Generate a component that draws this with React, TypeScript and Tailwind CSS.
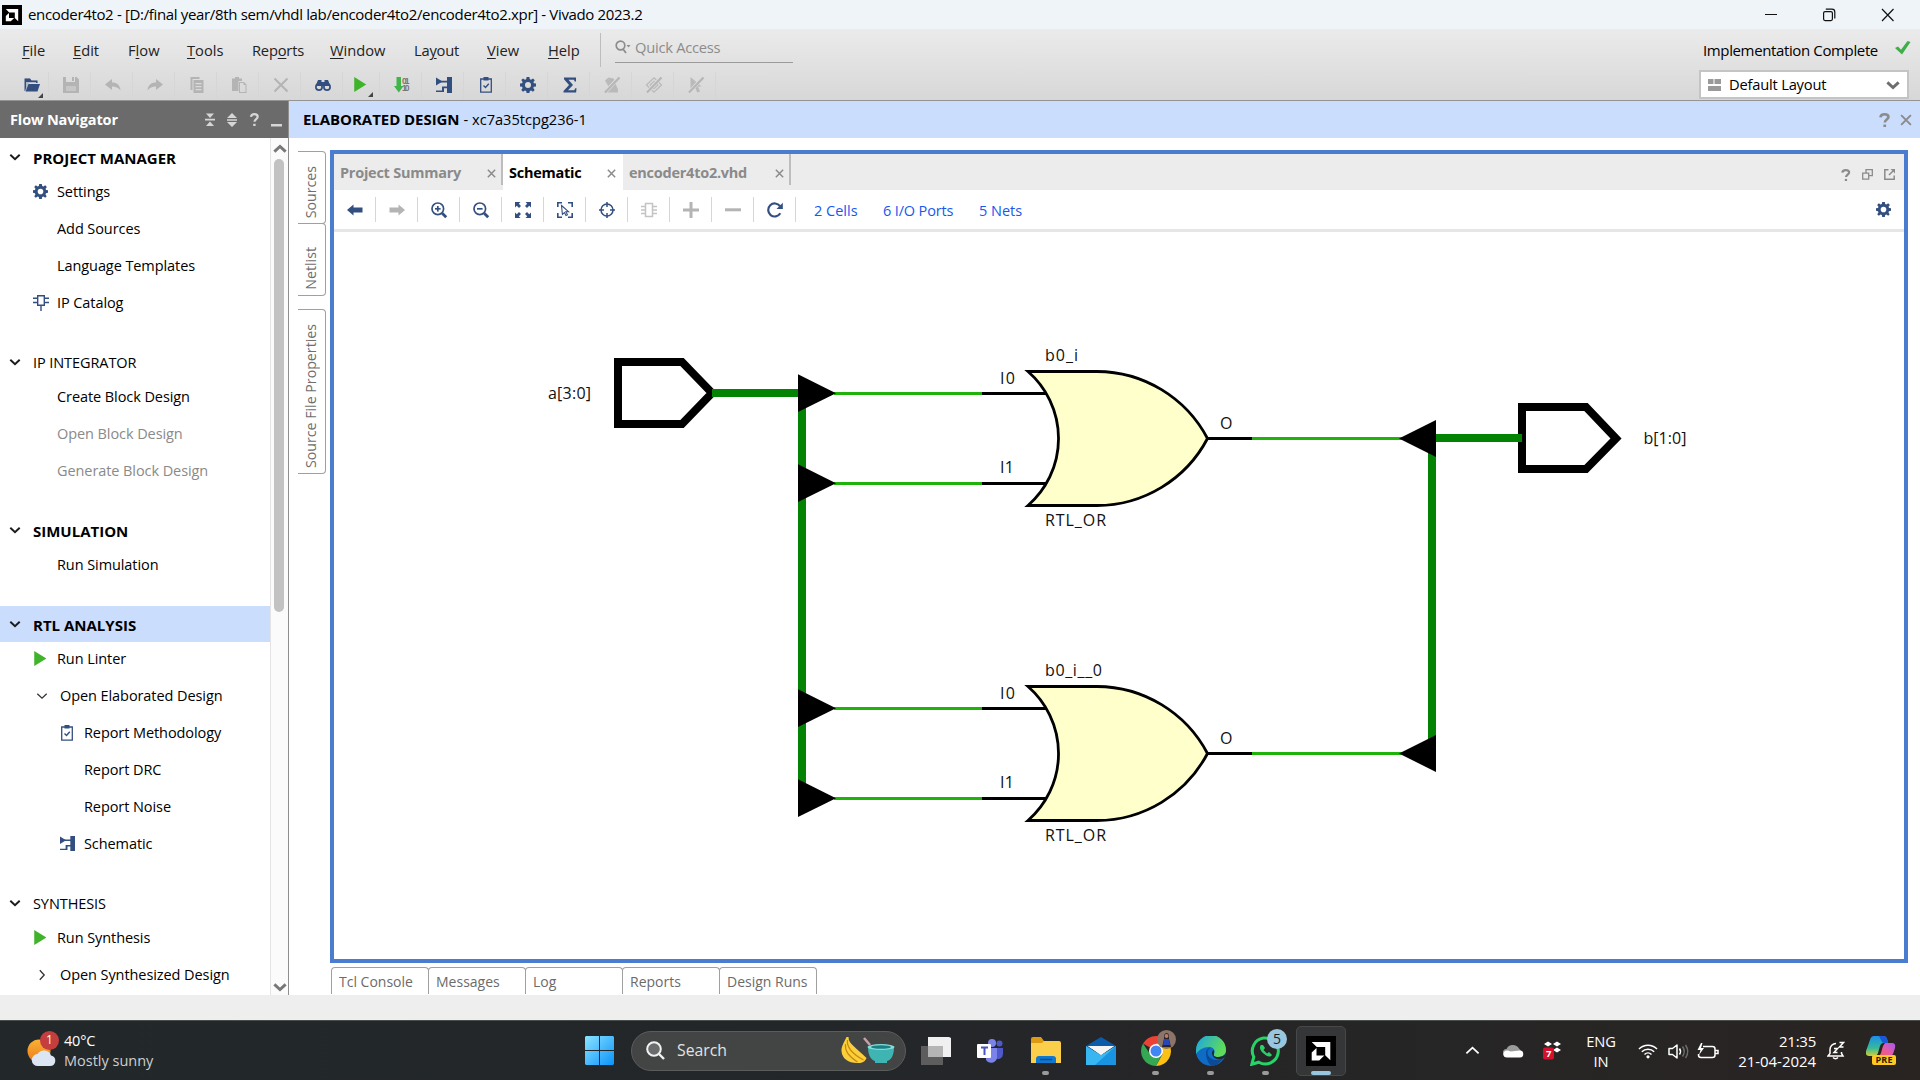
import React from "react";
import type { ReactNode } from "react";

const NAVY = "#334f80";
const GREY = "#b4b4b4";

type IconProps = { size?: number; color?: string };

function Svg({ size = 16, color = NAVY, children, vb = "0 0 16 16" }: IconProps & { children: ReactNode; vb?: string }) {
  return (
    <svg width={size} height={size} viewBox={vb} fill={color} stroke="none" className="block shrink-0 overflow-visible">
      {children}
    </svg>
  );
}

const Gear = (p: IconProps) => (
  <Svg {...p}>
    <path
      fillRule="evenodd"
      d="M6.6 0h2.8l.4 2.2 1.3.5L13 1.4 14.800 3.200 13.400 5l.5 1.300L16 6.600v2.800l-2.200.4-.5 1.300L14.600 13 13 14.700l-1.900-1.300-1.300.5L9.400 16H6.600l-.4-2.100-1.300-.5L3 14.700 1.300 13l1.300-1.900-.5-1.300L0 9.400V6.600l2.100-.3.500-1.300L1.300 3.100 3 1.400l1.900 1.300 1.300-.5zM8 5a3 3 0 1 0 0 6 3 3 0 0 0 0-6z"
    />
  </Svg>
);
const FolderOpen = (p: IconProps) => (
  <Svg {...p}>
    <path d="M1 1.500h5l1.500 2h6V6H5L2.500 12 1 14z" opacity=".25" />
    <path d="M.5 1.500h5.500l1.500 2H13.500V6H12V5H2v6L1 14H.5z" />
    <path d="M4.500 7H16l-2.500 7.500H1.500z" />
  </Svg>
);
const Save = (p: IconProps) => (
  <Svg {...p}>
    <path fillRule="evenodd" d="M0 0h3v5h9V0h1.500L16 2.500V16H0zM9 0h2v4H9zM3 9v5h10V9z" />
    <path d="M3 9h10v5H3z" opacity=".5" />
  </Svg>
);
const Undo = (p: IconProps) => (
  <Svg {...p}>
    <path d="M0 7.500 7 2v3.500c5 0 8 2.500 8.500 8C13 10.500 11 9.500 7 9.500V13z" />
  </Svg>
);
const Redo = (p: IconProps) => (
  <Svg {...p}>
    <path d="M16 7.500 9 2v3.500c-5 0-8 2.500-8.500 8C3 10.500 5 9.500 9 9.500V13z" />
  </Svg>
);
const Copy = (p: IconProps) => (
  <Svg {...p}>
    <path d="M1.500 0h9v2h-7v11h-2z" />
    <path fillRule="evenodd" d="M4.500 3h10v13h-10zM6.500 6v1.200h6V6zm0 3v1.200h6V9zm0 3v1.200h6V12z" />
  </Svg>
);
const Paste = (p: IconProps) => (
  <Svg {...p}>
    <path d="M1 1.500h3V0h4v1.500h3V4H7.500v10H1z" />
    <path fillRule="evenodd" d="M8 5h5l2.500 2.500V16H8zm1 1v9h5.500V8H12.500V6z" />
  </Svg>
);
const Cross = ({ w = 2, ...p }: IconProps & { w?: number }) => (
  <Svg {...p}>
    <path d="M1.500 1.500l13 13M14.500 1.500l-13 13" stroke={p.color} strokeWidth={w} />
  </Svg>
);
const Binoculars = (p: IconProps) => (
  <Svg {...p}>
    <path d="M3 3h3.500v2h3V3H13l2 5v1H1V8z" />
    <g fill="none" stroke={NAVY} strokeWidth="1.700">
      <circle cx="4" cy="10" r="3.100" />
      <circle cx="12" cy="10" r="3.100" />
    </g>
  </Svg>
);
const Play = ({ size = 15 }: { size?: number }) => (
  <svg width={size * 0.83} height={size} viewBox="0 0 12 15" className="block shrink-0">
    <path d="M0 0l12 7.500L0 15z" fill="#3fb32a" />
  </svg>
);
const Program = () => (
  <Svg>
    <path d="M2.500 0H7v9h2.500l-4.700 6.500L0 9h2.500z" fill="#3fb54a" />
    <text x="8" y="6.500" fontSize="8.500" fontWeight="700" fill="#777" fontFamily="Liberation Sans" textLength="7.500">01</text>
    <text x="8" y="14" fontSize="8.500" fontWeight="700" fill="#777" fontFamily="Liberation Sans" textLength="7.500">10</text>
  </Svg>
);
const SchematicIcon = (p: IconProps) => (
  <Svg {...p}>
    <path d="M0 .5l6.500 4L0 8.500z" />
    <path d="M4 3.800h8v1.600H4zM11 0h5v16h-5z" />
    <path d="M0 13.500h6V9.500h6v1.700H8V15H0z" />
  </Svg>
);
const Clipboard = (p: IconProps) => (
  <Svg {...p}>
    <path d="M2.700 2h10.600v13.200H2.700z" fill="none" stroke={NAVY} strokeWidth="1.300" />
    <path d="M5.500 0h5v3.500h-5z" />
    <path d="M5.500 8.500l2 2 3.300-3.800" fill="none" stroke={NAVY} strokeWidth="1.400" />
  </Svg>
);
const Sigma = (p: IconProps) => (
  <Svg {...p}>
    <path d="M2 0.500h12V4.500h-1.300L12 2.800H6.500L11 8l-5 5.200h6.300l.9-2H14.500l-.4 4.300H1.500V14L7 8 2 2.200z" />
  </Svg>
);
const SlashMark = ({ kind }: { kind: number }) => (
  <Svg color="#bababa">
    {kind === 0 && <path d="M1 3.500l3.500-3 5 1L11 4 4.500 9.500zM1 15.500v-3h5l5.500-6 2.500 6v3z" />}
    {kind === 1 && <path d="M8 .8L15.500 8 8 15.200.5 8zM8 4.300L11.800 8 8 11.700 4.200 8z" fill="none" stroke="#bababa" strokeWidth="1.300" />}
    {kind === 2 && <path d="M2.500 0l11 9.500H10l2 5-2.800 1-2-4.800L2.500 14z" />}
    <path d="M15 .5L1.500 15" stroke="#dcdcdc" strokeWidth="3.600" />
    <path d="M15.500 .5L1 15.500" stroke="#b6b6b6" strokeWidth="2.200" />
  </Svg>
);
const IpIcon = ({ color = NAVY }: IconProps) => (
  <Svg>
    <path d="M4.700.8h6.600v9.400H4.700zM0 3.200h4.700M0 7.500h4.700M11.300 3.200H16M11.300 7.500H16M8 10.200V16" fill="none" stroke={color} strokeWidth="1.400" />
  </Svg>
);
const Chevron = ({ dir = "down", w = 2, size = 10, color = "#1c1c1c" }: { dir?: "down" | "up" | "right"; w?: number; size?: number; color?: string }) => (
  <svg width={size} height={size} viewBox="0 0 10 10" fill="none" stroke={color} strokeWidth={w} className="block shrink-0 overflow-visible">
    {dir === "down" && <path d="M.3 2.800 5 7.200l4.700-4.400" />}
    {dir === "up" && <path d="M.3 7.200 5 2.800l4.700 4.400" />}
    {dir === "right" && <path d="M2.800.3 7.200 5 2.800 9.700" />}
  </svg>
);
const Arrow = ({ flip, color }: { flip?: boolean; color: string }) => (
  <Svg color={color}>
    <path d={flip ? "M16 8L9.500 2.500v3H.5v5h9v3z" : "M0 8l6.500-5.500v3h9v5h-9v3z"} />
  </Svg>
);
const Zoom = ({ plus }: { plus?: boolean }) => (
  <Svg>
    <g fill="none" stroke={NAVY} strokeWidth="1.700">
      <circle cx="6.800" cy="6.800" r="5.800" />
      <path d="M4 6.800h5.600" />
      {plus && <path d="M6.800 4v5.600" />}
      <path d="M11.200 11.200l4 4" strokeWidth="2.800" />
    </g>
  </Svg>
);
const Expand = () => (
  <Svg>
    <path d="M0 0h5.500L3.800 1.800 6 4 4 6 1.800 3.800 0 5.500zM16 0h-5.500l1.700 1.800L10 4l2 2 2.200-2.200L16 5.500zM0 16h5.500l-1.700-1.800L6 12l-2-2-2.200 2.200L0 10.500zM16 16h-5.500l1.700-1.800L10 12l2-2 2.200 2.200L16 10.500z" />
  </Svg>
);
const SelectFit = () => (
  <Svg>
    <path d="M.8 5V.8H5M11 .8h4.200V5M.8 11v4.200H5M11 15.200h4.200V11" fill="none" stroke={NAVY} strokeWidth="1.600" />
    <path d="M4.500 3.500l7 6.200H8.800l1.700 3-1.500.9-1.600-3-2 1.800z" fill="none" stroke={NAVY} strokeWidth="1.100" />
  </Svg>
);
const Target = () => (
  <Svg>
    <circle cx="8" cy="8" r="6" fill="none" stroke={NAVY} strokeWidth="1.500" />
    <path d="M8 0v5M8 11v5M0 8h5M11 8h5" stroke={NAVY} strokeWidth="1.500" />
  </Svg>
);
const Chip = () => (
  <Svg>
    <path d="M4.500 1.500h7v13h-7zM0 4.500h4.500M0 8h4.500M0 11.500h4.500M11.500 4.500H16M11.500 8H16M11.500 11.500H16" fill="none" stroke="#c4c4c4" strokeWidth="1.500" />
  </Svg>
);
const Refresh = () => (
  <Svg>
    <path d="M13.300 11.300A6.500 6.500 0 1 1 13 4.200" fill="none" stroke={NAVY} strokeWidth="2.200" />
    <path d="M15.800.8V7H9.500z" />
  </Svg>
);

function AmdLogo({ size }: { size: number }) {
  return (
    <svg width={size} height={size} viewBox="0 0 20 20" className="block shrink-0">
      <path d="M0 0h20v20H0z" fill="#000" />
      <path d="M3.800 4h12.400v12.200l-3.400-3.300V7.400H7.200zM7 8v5h5.200l-3.400 3.300H3.800V11z" fill="#fff" />
    </svg>
  );
}

/* ---------- window chrome ---------- */

function TitleBar() {
  return (
    <div className="flex h-[29px] shrink-0 items-center bg-[#eff4f9] pl-[2px]">
      <AmdLogo size={20} />
      <span className="ml-[6px] text-[15px] tracking-[-0.340px] text-black">
        encoder4to2 - [D:/final year/8th sem/vhdl lab/encoder4to2/encoder4to2.xpr] - Vivado 2023.2
      </span>
      <div className="ml-auto flex items-center pr-[26px]">
        <svg width="129" height="14" viewBox="0 0 129 14" fill="none" stroke="#111" strokeWidth="1.200">
          <path d="M0 6.500h12M117 1l11.500 12M128.500 1L117 13" />
          <rect x="58.600" y="3.600" width="8.800" height="9" rx="1.500" />
          <path d="M60.800 1.200h6.200c1.600 0 2.800 1 2.800 2.800v6.500" />
        </svg>
      </div>
    </div>
  );
}

const menus: { pre: string; key: string; post: string; cls: string }[] = [
  { pre: "", key: "F", post: "ile", cls: "w-[51px]" },
  { pre: "", key: "E", post: "dit", cls: "w-[55px]" },
  { pre: "F", key: "l", post: "ow", cls: "w-[59px]" },
  { pre: "", key: "T", post: "ools", cls: "w-[65px]" },
  { pre: "Rep", key: "o", post: "rts", cls: "w-[78px] tracking-[-0.200px]" },
  { pre: "", key: "W", post: "indow", cls: "w-[84px]" },
  { pre: "La", key: "y", post: "out", cls: "w-[73px] tracking-[-0.200px]" },
  { pre: "", key: "V", post: "iew", cls: "w-[61px]" },
  { pre: "", key: "H", post: "elp", cls: "w-[52px]" },
];

function Corner({ children }: { children: ReactNode }) {
  return (
    <div className="relative">
      {children}
      <svg width="5" height="5" viewBox="0 0 5 5" className="absolute -right-[3px] -bottom-[5px]">
        <path d="M5 0v5H0z" fill="#444" />
      </svg>
    </div>
  );
}

const mainTools: { icon: ReactNode; cls: string }[] = [
  { icon: <Corner><FolderOpen /></Corner>, cls: "w-[42px] pl-[8px]" },
  { icon: <Save color={GREY} />, cls: "w-[42px] pl-[2px]" },
  { icon: <Undo color={GREY} />, cls: "w-[42px] pl-[2px]" },
  { icon: <Redo color={GREY} />, cls: "w-[42px] pl-[2px]" },
  { icon: <Copy color={GREY} />, cls: "w-[42px] pl-[2px]" },
  { icon: <Paste color={GREY} />, cls: "w-[42px] pl-[2px]" },
  { icon: <Cross color={GREY} />, cls: "w-[42px] pl-[2px]" },
  { icon: <Binoculars />, cls: "w-[42px] pl-[2px]" },
  { icon: <Corner><div className="pr-[3px]"><Play /></div></Corner>, cls: "w-[37px] pl-[2px]" },
  { icon: <Program />, cls: "w-[42px] pl-[2px]" },
  { icon: <SchematicIcon />, cls: "w-[42px] pl-[2px]" },
  { icon: <Clipboard />, cls: "w-[42px] pl-[2px]" },
  { icon: <Gear />, cls: "w-[42px] pl-[2px]" },
  { icon: <Sigma />, cls: "w-[42px] pl-[2px]" },
  { icon: <SlashMark kind={0} />, cls: "w-[42px] pl-[2px]" },
  { icon: <SlashMark kind={1} />, cls: "w-[42px] pl-[2px]" },
  { icon: <SlashMark kind={2} />, cls: "w-[42px] pl-[2px]" },
];

function MenuArea() {
  return (
    <div className="flex h-[72px] shrink-0 justify-between border-b border-[#949494] bg-gradient-to-b from-[#ebebeb] to-[#d7d7d7]">
      <div className="flex flex-col">
        <div className="flex h-[39px] items-center pt-[3px] pl-[22px] text-[14.700px] text-[#222]">
          {menus.map((m) => (
            <span key={m.pre + m.key} className={m.cls}>
              {m.pre}
              <span className="underline underline-offset-2">{m.key}</span>
              {m.post}
            </span>
          ))}
          <div className="h-[34px] w-px bg-[#bdbdbd]" />
          <div className="mb-[5px] ml-[14px] flex h-[31px] w-[178px] items-center border-b border-[#9b9b9b] text-[#8c8c8c]">
            <svg width="16" height="14" viewBox="0 0 16 14" fill="none" stroke="#8c8c8c" strokeWidth="1.700">
              <circle cx="5.500" cy="5.500" r="4.300" />
              <path d="M8 9l3 4" />
              <path d="M11.500 5h4l-2 2.500z" fill="#8c8c8c" stroke="none" />
            </svg>
            <span className="ml-1 tracking-[-0.250px]">Quick Access</span>
          </div>
        </div>
        <div className="flex h-[32px] items-center pt-px pl-[7px]">
          {mainTools.map((t, i) => (
            <div key={i} className={`flex h-[26px] items-center justify-center border-r border-[#d6d6d6] ${t.cls}`}>
              {t.icon}
            </div>
          ))}
        </div>
      </div>
      <div className="flex w-[221px] flex-col">
        <div className="flex h-[41px] items-center pt-px pl-[4px] text-[15px]">
          <span className="w-[192px] tracking-[-0.370px]">Implementation Complete</span>
          <svg width="16" height="14" viewBox="0 0 16 14" className="mb-1">
            <path d="M0 7l3-1.500 3 3.200L12.500 0l3 1L7 13.500z" fill="#3fae49" />
          </svg>
        </div>
        <div className="flex h-[29px] w-[210px] items-center border-2 border-[#c4c4c4] bg-white pr-2 pl-[7px] text-[14.700px] text-black">
          <svg width="13" height="12" viewBox="0 0 13 12" fill="#9a9a9a">
            <path d="M0 0h5.500v5H0zM6.500 0H13v5H6.500zM0 7h13v5H0z" />
          </svg>
          <span className="ml-[8px] tracking-[-0.200px]">Default Layout</span>
          <span className="ml-auto"><Chevron size={12} w={2.400} color="#6e6e6e" /></span>
        </div>
      </div>
    </div>
  );
}

/* ---------- flow navigator ---------- */

type Item = { label: string; icon?: ReactNode; off?: boolean; level?: 1 | 2; caret?: "down" | "right" };
type Group = { title: string; bold?: boolean; active?: boolean; items: Item[] };

const RunIcon = () => <div className="pl-px"><Play /></div>;

const groups: Group[] = [
  {
    title: "PROJECT MANAGER",
    bold: true,
    items: [
      { label: "Settings", icon: <Gear size={15} /> },
      { label: "Add Sources" },
      { label: "Language Templates" },
      { label: "IP Catalog", icon: <IpIcon /> },
    ],
  },
  {
    title: "IP INTEGRATOR",
    items: [{ label: "Create Block Design" }, { label: "Open Block Design", off: true }, { label: "Generate Block Design", off: true }],
  },
  { title: "SIMULATION", bold: true, items: [{ label: "Run Simulation" }] },
  {
    title: "RTL ANALYSIS",
    bold: true,
    active: true,
    items: [
      { label: "Run Linter", icon: <RunIcon /> },
      { label: "Open Elaborated Design", caret: "down" },
      { label: "Report Methodology", icon: <Clipboard />, level: 2 },
      { label: "Report DRC", level: 2 },
      { label: "Report Noise", level: 2 },
      { label: "Schematic", icon: <div className="pl-px"><SchematicIcon size={15} /></div>, level: 2 },
    ],
  },
  { title: "SYNTHESIS", items: [{ label: "Run Synthesis", icon: <RunIcon /> }, { label: "Open Synthesized Design", caret: "right" }] },
];

function FlowNavigator() {
  return (
    <div className="flex w-[289px] shrink-0 flex-col border-r border-[#8f8f8f]">
      <div className="flex h-[37px] shrink-0 items-center bg-[#6b6b6b] pr-[6px] pl-[10px] text-[15px] font-bold text-white">
        <span className="text-[14.500px] tracking-[-0.120px]">Flow Navigator</span>
        <div className="ml-auto flex items-center">
          <svg width="77" height="14" viewBox="0 0 77 14" fill="#d6d6d6">
            <path d="M1 .5h8L5 5zM0 5.800h10v1.700H0zM1 13h8L5 8.500zM22 5h10l-5-5zM22 6.200h10v1.500H22zM22 9h10l-5 5z" />
            <path d="M66 11h11v2.500H66z" />
            <path d="M46 3.800C46.300 1.800 47.700 1.200 49.300 1.200c2.200 0 3.400 1 3.400 2.600 0 2.200-3.200 2.300-3.200 5" fill="none" stroke="#d6d6d6" strokeWidth="2.200" />
            <path d="M48.200 10.800h2.400V13h-2.400z" />
          </svg>
        </div>
      </div>
      <div className="flex h-[857px] overflow-hidden bg-white">
        <div className="w-[270px] pt-px">
          {groups.map((g) => (
            <div key={g.title} className="mb-[23px]">
              <div className={g.active ? "flex h-[36px] items-center bg-[#cbddfd] pl-[10px]" : "flex h-[36px] items-center pl-[10px]"}>
                <Chevron />
                <span className={g.bold ? "ml-[13px] pt-[2px] text-[15px] font-bold" : "ml-[13px] pt-[2px] text-[14.500px] tracking-[-0.080px]"}>
                  {g.title}
                </span>
              </div>
              <div className="-mt-[2px]">
                {g.items.map((it) => (
                  <div key={it.label} className={it.level === 2 ? "flex h-[37px] items-center pl-[59px]" : "flex h-[37px] items-center pl-[33px]"}>
                    <span className={it.caret ? "flex w-[27px] justify-center pr-[9px]" : it.level === 2 ? "w-[25px]" : "w-[24px]"}>
                      {it.caret ? <Chevron dir={it.caret} w={1.300} color="#333" /> : it.icon}
                    </span>
                    <span className={it.off ? "text-[14.500px] tracking-[-0.080px] text-[#8a8a8a]" : "text-[14.500px] tracking-[-0.080px] text-black"}>{it.label}</span>
                  </div>
                ))}
              </div>
            </div>
          ))}
        </div>
        <div className="flex w-[18px] flex-col items-center border-l border-[#e4e4e4] bg-[#fbfbfb]">
          <div className="flex h-[21px] items-center"><Chevron dir="up" size={12} w={2.400} color="#777" /></div>
          <div className="mr-[2px] h-[453px] w-[10px] rounded-full bg-[#c2c2c2]" />
          <div className="mt-auto mb-[2px]"><Chevron size={12} w={2.400} color="#777" /></div>
        </div>
      </div>
    </div>
  );
}

/* ---------- schematic canvas ---------- */

function Gate({ x, y, name }: { x: number; y: number; name: string }) {
  return (
    <g transform={`translate(${x} ${y})`}>
      <path d="M-42 22h64M-42 112h64M183 67h45" stroke="#000" strokeWidth="3" />
      <path d="M4 0H73A125.400 125.400 0 0 1 183.500 67A125.400 125.400 0 0 1 73 134H4A88.800 88.800 0 0 0 4 0z" fill="#ffffcc" stroke="#000" strokeWidth="2.800" />
      <g fill="#111" fontSize="16">
        <text x="21" y="-11" textLength={name.length > 5 ? 57 : 33}>{name}</text>
        <text x="-24" y="12.500" textLength="15">I0</text>
        <text x="-24" y="101.500" textLength="14">I1</text>
        <text x="196" y="57">O</text>
        <text x="21" y="154.500" textLength="61">RTL_OR</text>
      </g>
    </g>
  );
}

function Schematic() {
  return (
    <svg width="1570" height="727" viewBox="334 232 1570 727" className="block">
      <g stroke="#1fb20a" strokeWidth="3">
        <path d="M834 393.500H982M834 483.500H982M834 708.500H982M834 798.500H982M1251 438.500H1402M1251 753.500H1402" />
      </g>
      <Gate x={1024} y={371.500} name="b0_i" />
      <Gate x={1024} y={686.500} name="b0_i__0" />
      <path d="M618 362H682L712 393L682 424H618zM1522 407H1586L1616 438.500L1586 469H1522z" fill="#fff" stroke="#000" strokeWidth="8" />
      <path d="M712 393H802V798M1522 438H1432V753" fill="none" stroke="#048204" strokeWidth="8" />
      {[393, 483, 708, 798].map((y) => (
        <path key={y} d={`M798 ${y - 18.700}L836 ${y + 0.300}L798 ${y + 19}z`} />
      ))}
      {[438, 753].map((y) => (
        <path key={y} d={`M1436 ${y - 18}L1399 ${y + 0.500}L1436 ${y + 19}z`} />
      ))}
      <g fill="#111" fontSize="16">
        <text x="548" y="398.500" textLength="43">a[3:0]</text>
        <text x="1643.500" y="444" textLength="43">b[1:0]</text>
      </g>
    </svg>
  );
}

const canvasTools: ReactNode[] = [
  <Arrow color={NAVY} />,
  <Arrow flip color={GREY} />,
  <Zoom plus />,
  <Zoom />,
  <Expand />,
  <SelectFit />,
  <Target />,
  <Chip />,
  <Svg color={GREY}><path d="M6.500 0h3v6.500H16v3H9.500V16h-3V9.500H0v-3h6.500z" /></Svg>,
  <Svg color={GREY}><path d="M0 6.300h16v3H0z" /></Svg>,
  <Refresh />,
];

function SideTab({ label, cls }: { label: string; cls: string }) {
  return (
    <div className={`flex w-[28px] items-end justify-center rounded-r-[4px] border border-l-0 border-[#a0a0a0] pr-[2px] pb-[5px] ${cls}`}>
      <span className="rotate-180 text-[14.200px] leading-[20px] whitespace-nowrap text-[#6e6e6e] [writing-mode:vertical-rl]">{label}</span>
    </div>
  );
}

function DocTab({ label, active, cls }: { label: string; active?: boolean; cls: string }) {
  return (
    <div className={`flex items-start justify-between ${active ? "bg-white text-black" : "text-[#8a8a8a]"} ${cls}`}>
      <span className="pt-[9px] pl-[6px] text-[14.500px] leading-[20px] font-bold tracking-[-0.250px]">{label}</span>
      <div className={active ? "flex h-[31px] items-center pt-[7px] pr-[7px]" : "flex h-[31px] items-center border-r-2 border-[#bdbdbd] pt-[7px] pr-[5px]"}>
        <Cross size={9} color="#8a8a8a" w={2.600} />
      </div>
    </div>
  );
}

const Question = ({ size = 12 }: { size?: number }) => (
  <svg width={size * 0.800} height={size} viewBox="0 0 10 13" className="block">
    <path d="M1.200 4C1.400 2 3 1.200 4.900 1.200c2.300 0 3.700 1 3.700 2.600C8.600 6 5.200 6.200 5.200 8.800" fill="none" stroke="#8b8b8b" strokeWidth="2.400" />
    <path d="M3.900 10.700h2.500V13H3.900z" fill="#8b8b8b" />
  </svg>
);

function DesignPane() {
  return (
    <div className="flex min-w-0 flex-1 flex-col bg-white">
      <div className="flex h-[37px] shrink-0 items-center bg-[#cbddfd] pr-[8px] pl-[14px] text-[15px]">
        <span className="font-bold tracking-[-0.050px]">ELABORATED DESIGN</span>
        <span className="ml-1 text-[14.600px]">- xc7a35tcpg236-1</span>
        <div className="ml-auto flex items-center gap-[10px]">
          <Question size={14} />
          <Cross size={12} color="#8b8b8b" w={2.600} />
        </div>
      </div>
      <div className="flex pt-[12px]">
        <div className="flex w-[41px] shrink-0 flex-col pt-px pl-[9px]">
          <SideTab label="Sources" cls="h-[73px]" />
          <SideTab label="Netlist" cls="-mt-px h-[73px]" />
          <SideTab label="Source File Properties" cls="mt-[13px] h-[165px]" />
        </div>
        <div className="flex h-[813px] w-[1578px] flex-col border-4 border-[#4a7dd0]">
          <div className="flex h-[36px] shrink-0 bg-[#ececec]">
            <DocTab label="Project Summary" cls="w-[169px]" />
            <DocTab label="Schematic" active cls="w-[120px]" />
            <DocTab label="encoder4to2.vhd" cls="w-[168px]" />
            <div className="ml-auto flex items-center gap-[11px] pt-[5px] pr-[9px]">
              <Question />
              <svg width="11" height="11" viewBox="0 0 11 11" fill="none" stroke="#8b8b8b" strokeWidth="1.300">
                <path d="M.7 4.200h6v6h-6zM4 4V.7h6.300v6H7" />
              </svg>
              <svg width="11" height="11" viewBox="0 0 11 11" fill="none" stroke="#8b8b8b" strokeWidth="1.500">
                <path d="M4.500.8H.8v9.400h9.400V6.500M5 6l4-4" />
                <path d="M6.500 0H11v4.500z" fill="#8b8b8b" stroke="none" />
              </svg>
            </div>
          </div>
          <div className="flex h-[42px] shrink-0 items-center border-b-[3px] border-[#e6e6e6]">
            {canvasTools.map((t, i) => (
              <div key={i} className="flex h-[25px] w-[42px] items-center justify-center border-r border-[#d6d6d6]">{t}</div>
            ))}
            <div className="flex pt-[2px] pl-[18px] text-[14.500px] text-[#1758f0]">
              <span className="w-[69px]">2 Cells</span>
              <span className="w-[96px] tracking-[-0.150px]">6 I/O Ports</span>
              <span>5 Nets</span>
            </div>
            <div className="ml-auto pr-[13px]"><Gear size={15} /></div>
          </div>
          <Schematic />
        </div>
      </div>
      <div className="mt-[4px] flex h-[27px] pl-[42px] text-[14px] text-[#6b6b6b]">
        {["Tcl Console", "Messages", "Log", "Reports", "Design Runs"].map((t) => (
          <div key={t} className="-mr-px flex w-[98px] items-center rounded-t-[4px] border border-b-0 border-[#a0a0a0] pt-px pl-[7px] whitespace-nowrap">
            {t}
          </div>
        ))}
      </div>
    </div>
  );
}

/* ---------- taskbar ---------- */

function TaskCell({ children, dot, cls = "" }: { children: ReactNode; dot?: boolean; cls?: string }) {
  return (
    <div className={`relative flex h-[60px] w-[55px] shrink-0 items-center justify-center ${cls}`}>
      {children}
      {dot && <span className="absolute bottom-[6px] h-[4px] w-[7px] rounded-full bg-[#9a9a9a]" />}
    </div>
  );
}

function Taskbar() {
  return (
    <div className="flex h-[60px] shrink-0 items-center border-t border-[#4a4e4b] bg-gradient-to-r from-[#22282a] via-[#242629] to-[#292422] text-white">
      <div className="flex w-[585px] items-center pl-[26px]">
        <div className="relative h-[34px] w-[32px]">
          <svg width="32" height="34" viewBox="0 0 32 34">
            <defs>
              <linearGradient id="sun" x1="0" y1="0" x2="0" y2="1">
                <stop offset="0" stopColor="#f9b233" />
                <stop offset="1" stopColor="#ee7a1c" />
              </linearGradient>
            </defs>
            <circle cx="13" cy="17" r="11.500" fill="url(#sun)" />
            <path d="M12 32a6 6 0 0 1-.5-12 7.500 7.500 0 0 1 13.500 1.500A5.300 5.300 0 0 1 24 32z" fill="#dce6f3" />
          </svg>
          <span className="absolute -top-[3px] -right-px flex size-[19px] items-center justify-center rounded-full bg-[#c43e3e] text-[12px]">1</span>
        </div>
        <div className="ml-[6px] text-[14.500px] leading-[20px]">
          <div className="tracking-[-0.200px]">40°C</div>
          <div className="text-[#cfcfcf]">Mostly sunny</div>
        </div>
      </div>
      <svg width="29" height="29" viewBox="0 0 29 29" className="shrink-0">
        <defs>
          <linearGradient id="win" x1="0" y1="0" x2="1" y2="1">
            <stop offset="0" stopColor="#8be3ff" />
            <stop offset="1" stopColor="#0a93fb" />
          </linearGradient>
        </defs>
        <path d="M1 0h13v14H0V1zM15 0h13l1 1v13H15zM0 15h14v14H1l-1-1zM15 15h14v13l-1 1H15z" fill="url(#win)" />
      </svg>
      <div className="ml-[17px] flex h-[40px] w-[275px] shrink-0 items-center rounded-full border border-[#5b5c5c] bg-[#434545] pl-[14px]">
        <svg width="19" height="19" viewBox="0 0 19 19" fill="none" stroke="#f2f2f2" strokeWidth="2">
          <circle cx="8" cy="8" r="6.800" fill="#6a6c6d" />
          <path d="M13 13l5 5" strokeWidth="2.400" />
        </svg>
        <span className="ml-[12px] text-[15.800px] text-[#e2e2e2]">Search</span>
        <svg width="54" height="27" viewBox="0 0 54 27" className="mr-[10px] ml-auto">
          <path d="M5.500 0h2c0 4 2 6 5 9 4 4 9 8 13 12-1 3-4 5-8 5C8 26.500 1 22 .5 14 .2 9 3.500 5 5.500 0z" fill="#fbcf3a" />
          <path d="M6.500 3c-1 7 5 14 16 20M4.500 7c-1 7 4 13 12 18" stroke="#c88912" strokeWidth="1.200" fill="none" />
          <path d="M29 8L23 1" stroke="#caa0a8" strokeWidth="2.500" />
          <path d="M27 10h26c0 9-3 13-7 14v2H34v-2c-4-1-7-6-7-14z" fill="#3fb5b3" />
          <ellipse cx="40" cy="10" rx="13.500" ry="3" fill="#7fe0dc" />
          <ellipse cx="40" cy="10" rx="10" ry="1.800" fill="#1d7f84" />
        </svg>
      </div>
      <TaskCell cls="ml-[2px]">
        <svg width="30" height="28" viewBox="0 0 30 28">
          <path d="M0 9h22v19H0z" fill="#5d5d5d" />
          <path d="M7 0h21l2 1v19H7z" fill="#f0f0f0" />
          <path d="M7 9h15v11H7z" fill="#b4b4b4" />
        </svg>
      </TaskCell>
      <TaskCell>
        <svg width="27" height="24" viewBox="0 0 27 24">
          <circle cx="15" cy="4" r="4" fill="#7b83eb" />
          <circle cx="22.500" cy="4.500" r="3" fill="#5059c9" />
          <path d="M18 9h8v6a5 5 0 0 1-8 4z" fill="#5059c9" />
          <path d="M9 9h11v8a6 6 0 0 1-11 4z" fill="#7b83eb" />
          <rect y="5" width="14" height="14" rx="1" fill="#fff" />
          <path d="M4 8.500h7M7.500 8.500V16" stroke="#4b53bc" strokeWidth="2" />
        </svg>
      </TaskCell>
      <TaskCell dot>
        <svg width="30" height="27" viewBox="0 0 30 27">
          <path d="M0 2Q0 0 2 0h8l3 4v4H0z" fill="#dc9b13" />
          <path d="M0 6h11l2-2h15q2 0 2 2v20H0z" fill="#fccf4b" />
          <path d="M5 26v-4q0-3 3-3h14q3 0 3 3v4z" fill="#1178cf" />
          <path d="M9 22.500h12" stroke="#0a4f91" strokeWidth="1.500" />
        </svg>
      </TaskCell>
      <TaskCell>
        <svg width="30" height="28" viewBox="0 0 30 28">
          <path d="M0 9L15 0l15 9v3H0z" fill="#0a5ba8" />
          <path d="M2 9h26L15 18z" fill="#f4f4f4" />
          <path d="M0 9l15 9L30 9v19H0z" fill="#38b6f2" />
          <path d="M2 9h26L15 18z" fill="#f4f4f4" />
          <path d="M30 9L9 28h21z" fill="#1a94e0" />
        </svg>
      </TaskCell>
      <TaskCell dot>
        <svg width="30" height="30" viewBox="-15 -15 30 30">
          <path d="M0 0L-12.990-7.500A15 15 0 0 1 12.990-7.500z" fill="#ea4335" />
          <path d="M-12.990-7.500A15 15 0 0 0 0 15L6 3-6 3z" fill="#34a853" />
          <path d="M12.990-7.500A15 15 0 0 1 0 15L6.500 3 0-7.500z" fill="#fbc116" />
          <circle r="7" fill="#fff" />
          <circle r="5.500" fill="#4285f4" />
        </svg>
        <svg width="19" height="19" viewBox="0 0 19 19" className="absolute top-[9px] right-[7px]">
          <circle cx="9.500" cy="9.500" r="9.500" fill="#8c7468" />
          <path d="M7 5q3-4 5 0v4l2 8H5l2-8z" fill="#2a2328" />
          <circle cx="9.500" cy="6" r="2" fill="#b58067" />
          <path d="M7 9h5l1 6H6z" fill="#2746b8" />
        </svg>
      </TaskCell>
      <TaskCell dot>
        <svg width="30" height="30" viewBox="0 0 30 30">
          <defs>
            <linearGradient id="edgeTop" x1="0" y1="0" x2="1" y2=".4">
              <stop offset="0" stopColor="#1ba3e8" />
              <stop offset="1" stopColor="#5fdc58" />
            </linearGradient>
          </defs>
          <circle cx="15" cy="15" r="15" fill="#0f6cc5" />
          <path d="M0 14A15 15 0 0 1 30 14c0 5-4 7-8 7-3 0-5-1-4-3 2-4-1-7-5-7-6 0-10 3-13 7z" fill="url(#edgeTop)" />
          <path d="M10 17c0-3 2-5 4-5-6 5 0 12 6 12 3 0 5-1 7-2-3 5-7 8-12 8-3-3-5-8-5-13z" fill="#0b4a96" />
          <path d="M18 18c-1 2 1 3 4 3s6-1 8-4c0 2-1 4-2 5-6 3-12 0-12-5 0-2 1-3 2-3z" fill="#25282b" />
        </svg>
      </TaskCell>
      <TaskCell dot>
        <svg width="31" height="30" viewBox="0 0 31 30" fill="none" stroke="#27d366">
          <path d="M1.800 28.300L3.800 21A13 13 0 1 1 8.800 26.200z" strokeWidth="3" />
          <path d="M11 9c-2 2-1 5 2 8s7 5 9 2l-3-3-2 1.500-3.500-3.500L15 12l-2-3z" fill="#27d366" stroke="none" />
        </svg>
        <span className="absolute top-[8px] right-[6px] flex size-[20px] items-center justify-center rounded-full bg-[#99c6df] text-[14px] text-[#15222a]">5</span>
      </TaskCell>
      <TaskCell>
        <div className="flex h-[50px] w-[50px] items-center justify-center rounded-[5px] border border-[#46484a] bg-[#343637]">
          <AmdLogo size={30} />
        </div>
        <span className="absolute bottom-[6px] h-[4px] w-[20px] rounded-full bg-[#99c6df]" />
      </TaskCell>

      <div className="ml-auto flex items-center pr-[24px]">
        <Chevron dir="up" size={13} w={1.400} color="#fff" />
        <svg width="21" height="14" viewBox="0 0 21 14" className="ml-[24px]">
          <path d="M4 13A4 4 0 0 1 3.500 5 7 7 0 0 1 16 4.500L20 9z" fill="#9b9b9b" />
          <path d="M4 13.500A3.500 3.500 0 0 1 4 6.500q2 0 3.500 1l9-1a3.500 3.500 0 0 1 .5 7z" fill="#fff" />
        </svg>
        <svg width="19" height="19" viewBox="0 0 19 19" className="ml-[19px]">
          <path d="M1 3l4-2.500L9 3 5 5.500zM10 3l4-2.500L18 3l-4 2.500zM10 9l4-2.500L18 9l-4 2.500z" fill="#fff" />
          <rect y="6.500" width="11" height="12" rx="2" fill="#d6102c" />
          <text x="3" y="16" fontSize="9.500" fontWeight="700" fill="#fff">7</text>
        </svg>
        <div className="ml-[23px] w-[32px] text-center text-[14.700px] leading-[20px]">
          <div className="-mx-1 tracking-[-0.200px]">ENG</div>
          <div>IN</div>
        </div>
        <svg width="82" height="18" viewBox="0 0 82 18" fill="none" stroke="#fff" strokeWidth="1.500" className="ml-[21px]">
          <path d="M1 7a12.500 12.500 0 0 1 18 0M3.800 9.800a8.700 8.700 0 0 1 12.400 0M6.500 12.500a5 5 0 0 1 7 0" />
          <circle cx="10" cy="14.800" r="1.600" fill="#fff" stroke="none" />
          <path d="M31 6.500h3.500L39 3v13l-4.500-3.500H31zM41.500 6.500q2 3 0 6" strokeLinejoin="round" />
          <path d="M44.500 4.500q3.500 5 0 10M47.500 3q4.500 6.500 0 13" stroke="#6c6c6c" />
          <path d="M65 4.500h9.500q2.500 0 2.500 2.500v6q0 2.500-2.500 2.500H63q-2.500 0-2.500-2.500v-1M77.500 8.500h2.500v3h-2.500" />
          <path d="M63 1l-3.500 7h3l-1.500 5 5-7h-3l1.500-5z" fill="#fff" stroke="none" />
        </svg>
        <div className="ml-[14px] w-[82px] text-right text-[15px] leading-[20px] whitespace-nowrap">
          <div className="tracking-[-0.250px]">21:35</div>
          <div className="-ml-2 tracking-[-0.050px]">21-04-2024</div>
        </div>
        <svg width="18" height="19" viewBox="0 0 18 19" fill="none" stroke="#fff" strokeWidth="1.500" className="ml-[11px]">
          <path d="M9 2.500a6 6 0 0 0-6 6v4L1 15h15l-1.500-2.500V11M6 16.500q2.500 2.500 5 0M7 7.500h3.500L7 11.500h3.500M12.500 1.500h4l-4 4.500h4" />
        </svg>
        <svg width="30" height="29" viewBox="0 0 30 29" className="ml-[21px]">
          <defs>
            <linearGradient id="cpA" x1="0" y1="0" x2="0" y2="1">
              <stop offset="0" stopColor="#1a8fe8" />
              <stop offset=".6" stopColor="#35b99c" />
              <stop offset="1" stopColor="#d4ce32" />
            </linearGradient>
            <linearGradient id="cpB" x1="0" y1="1" x2="1" y2="0">
              <stop offset="0" stopColor="#f5653f" />
              <stop offset=".5" stopColor="#e659a8" />
              <stop offset="1" stopColor="#a05cf0" />
            </linearGradient>
          </defs>
          <path d="M8 0h10q3 0 4 7h-5q-2 0-3 3l-2 7q-1 3-4 3H3q-4 0-3-5L4 4q1-4 4-4z" fill="url(#cpA)" />
          <path d="M13 0h5q3 0 4 7h-4q-2 0-3-3z" fill="#1b57d6" />
          <path d="M19 7h7q4 0 3 5l-2 6-3 3H12q2-1 3-4l2-7z" fill="url(#cpB)" />
          <rect x="6" y="19" width="24" height="10" rx="2" fill="#ffc91f" />
          <text x="9.500" y="27.300" fontSize="9" fontWeight="700" fill="#2b2100" textLength="17">PRE</text>
        </svg>
      </div>
    </div>
  );
}

export default function App() {
  return (
    <div className="flex h-[1080px] w-[1920px] flex-col overflow-hidden bg-[#eeeeee] font-['Open_Sans','Noto_Sans',sans-serif] text-black">
      <TitleBar />
      <MenuArea />
      <div className="flex h-[894px] shrink-0">
        <FlowNavigator />
        <DesignPane />
      </div>
      <div className="h-[25px] shrink-0 bg-[#eeeeee]" />
      <Taskbar />
    </div>
  );
}
